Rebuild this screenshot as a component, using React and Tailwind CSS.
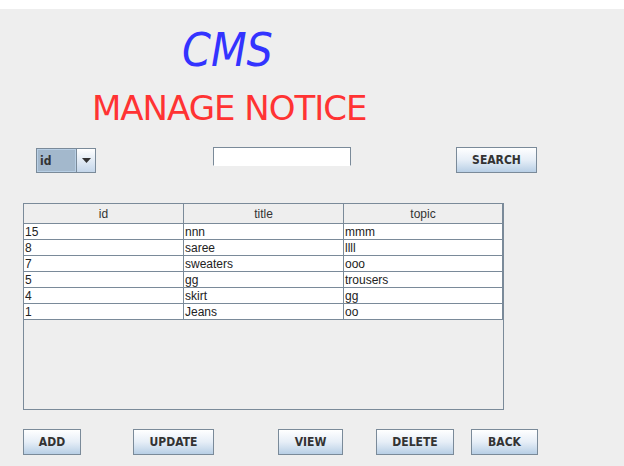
const rows = [
  ["15", "nnn", "mmm"],
  ["8", "saree", "llll"],
  ["7", "sweaters", "ooo"],
  ["5", "gg", "trousers"],
  ["4", "skirt", "gg"],
  ["1", "Jeans", "oo"],
];

const btn =
  "h-[26px] border border-[#7a8a99] bg-gradient-to-b from-white via-[#e6eef7] to-[#b8cfe5] text-[12px] font-bold text-[#333] flex items-center justify-center font-['DejaVu_Sans_Condensed',sans-serif]";

export default function App() {
  return (
    <div className="w-[624px] h-[466px] bg-[#eeeeee] overflow-hidden font-['Liberation_Sans',Arial,sans-serif]">
      <div className="h-[9px] bg-white" />

      {/* headings */}
      <div className="mt-[18px] pl-[182px] h-[45px] text-[46px] leading-none italic text-[#3333ff] font-['DejaVu_Sans_Condensed',sans-serif]">
        CMS
      </div>
      <div className="mt-[19px] pl-[92px] h-[34px] text-[34px] leading-none tracking-[-1px] text-[#ff3333] font-['DejaVu_Sans',sans-serif]">
        MANAGE NOTICE
      </div>

      {/* search row */}
      <div className="mt-[22px] flex items-start">
        <div className="ml-[36px] mt-px w-[60px] h-[25px] border border-[#7a8a99] flex bg-white">
          <div className="w-[39px] h-full bg-[#a3b8cc] border border-[#b8cfe5] flex items-center pl-[2px] text-[12px] font-bold text-[#333] font-['DejaVu_Sans_Condensed',sans-serif]">
            id
          </div>
          <div className="flex-1 border-l border-[#7a8a99] bg-gradient-to-b from-white to-[#c4d6ea] flex items-center justify-center">
            <svg width="9" height="5" viewBox="0 0 9 5">
              <path d="M0 0h9L4.5 5z" fill="#333" />
            </svg>
          </div>
        </div>
        <div className="ml-[117px] w-[138px] h-[19px] bg-white border border-[#7a8a99] border-b-white" />
        <button className={btn + " ml-[105px] w-[81px] h-[26px]"}>SEARCH</button>
      </div>

      {/* table */}
      <div className="mt-[30px] ml-[23px] w-[481px] h-[207px] border border-[#7a8a99] bg-[#eeeeee]">
        <div className="w-[479px]">
          <div className="grid grid-cols-[160px_160px_159px] h-[20px] border-b border-[#7a8a99] bg-[#eeeeee] text-[12px] text-[#333]">
            {["id", "title", "topic"].map((h) => (
              <div key={h} className="border-r border-[#7a8a99] text-center leading-[19px] pt-px">
                {h}
              </div>
            ))}
          </div>
          {rows.map((r) => (
            <div
              key={r[0]}
              className="grid grid-cols-[160px_160px_159px] h-[16px] border-b border-[#7a8a99] bg-white text-[12px] text-[#222]"
            >
              {r.map((c, i) => (
                <div key={i} className="border-r border-[#7a8a99] leading-[16px] pl-px">
                  {c}
                </div>
              ))}
            </div>
          ))}
        </div>
      </div>

      {/* bottom buttons */}
      <div className="mt-[19px] flex">
        <button className={btn + " ml-[23px] w-[58px]"}>ADD</button>
        <button className={btn + " ml-[52px] w-[81px]"}>UPDATE</button>
        <button className={btn + " ml-[64px] w-[65px]"}>VIEW</button>
        <button className={btn + " ml-[33px] w-[78px]"}>DELETE</button>
        <button className={btn + " ml-[17px] w-[67px]"}>BACK</button>
      </div>
    </div>
  );
}
